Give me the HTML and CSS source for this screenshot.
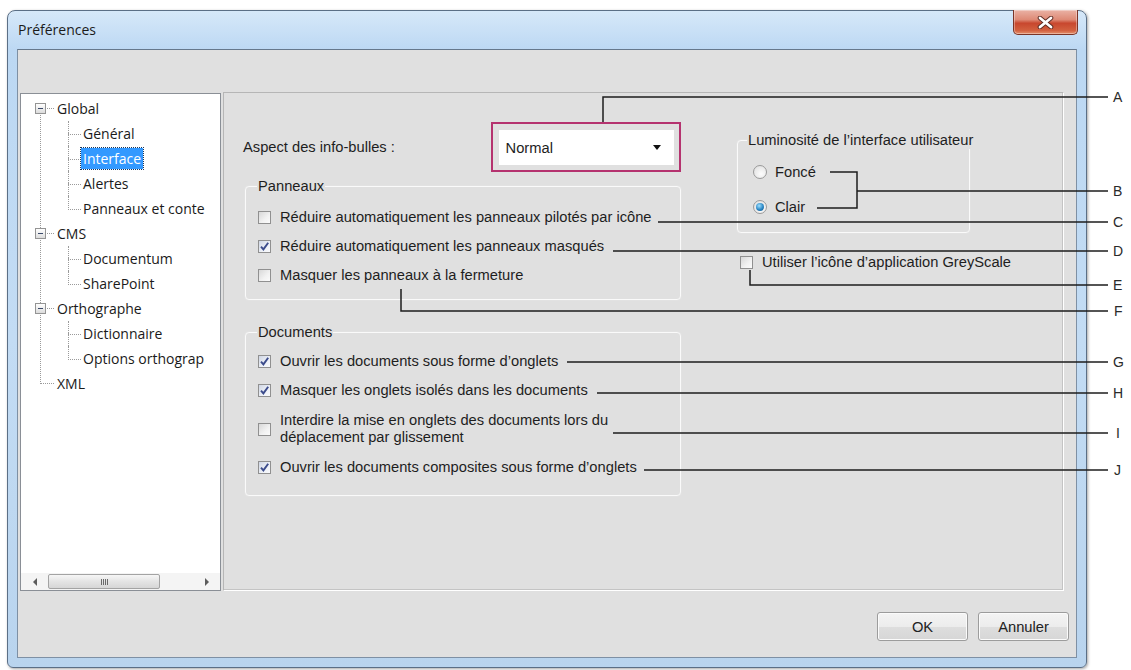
FILE: index.html
```html
<!DOCTYPE html>
<html lang="fr">
<head>
  <meta charset="UTF-8">
  <title>Préférences</title>
  <link rel="stylesheet" href="styles.css">
</head>
<body>
  <div class="window">
    <div class="titlebar">
      <span class="title">Préférences</span>
      <span class="close-btn">
        <svg width="17" height="13" viewBox="0 0 17 13">
          <path d="M3 2 L14 11 M14 2 L3 11" stroke="#5b2a22" stroke-width="4.6" stroke-linecap="round"/>
          <path d="M3 2 L14 11 M14 2 L3 11" stroke="#fff" stroke-width="2.8" stroke-linecap="round"/>
        </svg>
      </span>
    </div>

    <div class="client">
      <div class="main">
        <!-- category tree -->
        <div class="tree">
          <ul class="nodes">
            <li class="root">
              <div class="row"><span class="toggle"></span><span class="label">Global</span></div>
              <ul>
                <li><div class="row"><span class="label">Général</span></div></li>
                <li><div class="row"><span class="label selected">Interface</span></div></li>
                <li><div class="row"><span class="label">Alertes</span></div></li>
                <li><div class="row"><span class="label">Panneaux et conte</span></div></li>
              </ul>
            </li>
            <li class="root">
              <div class="row"><span class="toggle"></span><span class="label">CMS</span></div>
              <ul>
                <li><div class="row"><span class="label">Documentum</span></div></li>
                <li><div class="row"><span class="label">SharePoint</span></div></li>
              </ul>
            </li>
            <li class="root">
              <div class="row"><span class="toggle"></span><span class="label">Orthographe</span></div>
              <ul>
                <li><div class="row"><span class="label">Dictionnaire</span></div></li>
                <li><div class="row"><span class="label">Options orthograp</span></div></li>
              </ul>
            </li>
            <li class="root">
              <div class="row"><span class="label">XML</span></div>
            </li>
          </ul>
          <div class="hscroll">
            <span class="sb-btn"><span class="arrow-left"></span></span>
            <span class="thumb"><span class="grip"></span></span>
            <span class="sb-track"></span>
            <span class="sb-btn"><span class="arrow-right"></span></span>
          </div>
        </div>

        <!-- interface settings -->
        <div class="panel">
          <div class="col">
            <div class="tip-row">
              <span class="tip-label">Aspect des info-bulles :</span>
              <div class="highlight">
                <div class="combo">
                  <span>Normal</span>
                  <span class="combo-arrow"></span>
                </div>
              </div>
            </div>

            <div class="group panels">
              <span class="legend">Panneaux</span>
              <div class="opt"><span class="cb"></span>Réduire automatiquement les panneaux pilotés par icône</div>
              <div class="opt"><span class="cb on"><svg viewBox="0 0 11 11"><path d="M2 5.6 L4.4 8.4 L9.2 1.8" fill="none" stroke="#3c4c8c" stroke-width="1.9"/></svg></span>Réduire automatiquement les panneaux masqués</div>
              <div class="opt"><span class="cb"></span>Masquer les panneaux à la fermeture</div>
            </div>

            <div class="group docs">
              <span class="legend">Documents</span>
              <div class="opt"><span class="cb on"><svg viewBox="0 0 11 11"><path d="M2 5.6 L4.4 8.4 L9.2 1.8" fill="none" stroke="#3c4c8c" stroke-width="1.9"/></svg></span>Ouvrir les documents sous forme d’onglets</div>
              <div class="opt"><span class="cb on"><svg viewBox="0 0 11 11"><path d="M2 5.6 L4.4 8.4 L9.2 1.8" fill="none" stroke="#3c4c8c" stroke-width="1.9"/></svg></span>Masquer les onglets isolés dans les documents</div>
              <div class="opt two-line"><span class="cb"></span><span>Interdire la mise en onglets des documents lors du<br>déplacement par glissement</span></div>
              <div class="opt last"><span class="cb on"><svg viewBox="0 0 11 11"><path d="M2 5.6 L4.4 8.4 L9.2 1.8" fill="none" stroke="#3c4c8c" stroke-width="1.9"/></svg></span>Ouvrir les documents composites sous forme d’onglets</div>
            </div>
          </div>

          <div class="col">
            <div class="group brightness">
              <span class="legend">Luminosité de l’interface utilisateur</span>
              <div class="opt"><span class="radio"></span>Foncé</div>
              <div class="opt"><span class="radio on"></span>Clair</div>
            </div>
            <div class="opt greyscale"><span class="cb"></span>Utiliser l’icône d’application GreyScale</div>
          </div>
        </div>
      </div>

      <div class="footer">
        <button class="btn">OK</button>
        <button class="btn">Annuler</button>
      </div>
    </div>
  </div>

  <!-- callout lines -->
  <svg class="callouts" width="1131" height="670" viewBox="0 0 1131 670">
    <g fill="none" stroke="#1c1c1c" stroke-width="1.5">
      <polyline points="603,122 603,97 1108,97"/>
      <polyline points="830,172 857,172 857,208 817,208"/>
      <line x1="857" y1="191" x2="1108" y2="191"/>
      <line x1="658" y1="222" x2="1108" y2="222"/>
      <line x1="613" y1="251" x2="1108" y2="251"/>
      <polyline points="750,270 750,285 1108,285"/>
      <polyline points="401,289 401,311 1108,311"/>
      <line x1="567" y1="362" x2="1108" y2="362"/>
      <line x1="597" y1="393" x2="1108" y2="393"/>
      <line x1="613" y1="433" x2="1108" y2="433"/>
      <line x1="644" y1="470" x2="1108" y2="470"/>
    </g>
    <g class="letters">
      <text x="1113" y="102">A</text>
      <text x="1113" y="196">B</text>
      <text x="1113" y="227">C</text>
      <text x="1113" y="256">D</text>
      <text x="1113" y="290">E</text>
      <text x="1114" y="316">F</text>
      <text x="1113" y="367">G</text>
      <text x="1113" y="398">H</text>
      <text x="1116" y="438">I</text>
      <text x="1114" y="475">J</text>
    </g>
  </svg>
</body>
</html>
```

FILE: styles.css
```css
* {
  box-sizing: border-box;
}

body {
  margin: 0;
  width: 1131px;
  height: 670px;
  overflow: hidden;
  position: relative;
  background: #fff;
  font-family: 'Liberation Sans', Arial, sans-serif;
  font-size: 14.7px;
  color: #1e1e1e;
}

/* Window frame */
.window {
  margin: 10px 0 0 7px;
  width: 1080px;
  height: 658px;
  border: 1px solid #5b6f86;
  border-radius: 8px 8px 6px 6px;
  background: linear-gradient(to bottom, #d6e8f9, #bcd8f3 6%, #c3dcf4 50%, #b9d4ee);
  box-shadow: 1px 1px 3px rgba(0, 0, 0, 0.35);
  display: flex;
  flex-direction: column;
}

.titlebar {
  height: 38px;
  display: flex;
  align-items: flex-start;
}

.title {
  font-family: 'Open Sans', sans-serif;
  font-size: 14px;
  line-height: 20px;
  color: #1b1b1b;
  margin: 9px 0 0 10px;
}

.close-btn {
  margin: -1px 8px 0 auto;
  width: 65px;
  height: 25px;
  border: 1px solid #7b3427;
  border-top: none;
  border-radius: 0 0 5px 5px;
  background: linear-gradient(to bottom, #eab2a5, #de8a76 40%, #c8472e 55%, #d2603f 85%, #e4906c);
  box-shadow: inset 0 0 0 1px rgba(255, 255, 255, 0.35);
  display: flex;
  align-items: center;
  justify-content: center;
}

.client {
  flex: 1;
  margin: 0 9px 9px;
  background: #e0e0e0;
  border: 1px solid #7e90a4;
  border-top-color: #66788c;
  padding: 42px 0 0 2px;
  display: flex;
  flex-direction: column;
}

.main {
  display: flex;
  gap: 2px;
  height: 499px;
  align-items: flex-start;
}

/* Tree view */
.tree {
  width: 201px;
  height: 498px;
  margin-top: 1px;
  border: 1px solid #8a8f96;
  background: #fff;
  display: flex;
  flex-direction: column;
  font-family: 'Open Sans', sans-serif;
  font-size: 14px;
  color: #1a1a1a;
}

.nodes {
  list-style: none;
  margin: 0;
  padding: 2px 0 0;
  flex: 1;
  overflow: hidden;
}

.nodes ul {
  list-style: none;
  margin: 0;
  padding: 0;
}

.nodes li {
  position: relative;
}

.row {
  height: 25px;
  display: flex;
  align-items: center;
  white-space: nowrap;
  position: relative;
}

.root > .row {
  padding-left: 34px;
}

.nodes ul .row {
  padding-left: 60px;
}

.label {
  padding: 0 2px;
  line-height: 21px;
}

.label.selected {
  background: #3399ff;
  color: #fff;
  outline: 1px dotted #17355c;
}

.toggle {
  position: absolute;
  left: 14px;
  top: 7px;
  width: 11px;
  height: 11px;
  border: 1px solid #949494;
  background: linear-gradient(to bottom, #fff, #dcdcdc);
  z-index: 1;
}

.toggle::after {
  content: "";
  position: absolute;
  left: 2px;
  top: 4px;
  width: 5px;
  height: 1px;
  background: #3b4a6a;
}

/* dotted connectors */
.root > .row::before {
  content: "";
  position: absolute;
  left: 19px;
  top: 12px;
  width: 14px;
  border-top: 1px dotted #9a9a9a;
}

.root:not(:last-child)::after {
  content: "";
  position: absolute;
  left: 19px;
  top: 12px;
  bottom: -13px;
  border-left: 1px dotted #9a9a9a;
}

.nodes ul li::before {
  content: "";
  position: absolute;
  left: 47px;
  top: 0;
  width: 12px;
  height: 13px;
  border-left: 1px dotted #9a9a9a;
  border-bottom: 1px dotted #9a9a9a;
}

.nodes ul li:not(:last-child)::after {
  content: "";
  position: absolute;
  left: 47px;
  top: 12px;
  bottom: 0;
  border-left: 1px dotted #9a9a9a;
}

/* horizontal scroll bar */
.hscroll {
  height: 17px;
  display: flex;
  align-items: center;
  background: #f4f4f4;
}

.sb-btn {
  width: 27px;
  height: 17px;
  display: flex;
  align-items: center;
  justify-content: center;
}

.arrow-left {
  border-top: 4px solid transparent;
  border-bottom: 4px solid transparent;
  border-right: 4px solid #5c5c5c;
}

.arrow-right {
  border-top: 4px solid transparent;
  border-bottom: 4px solid transparent;
  border-left: 4px solid #5c5c5c;
}

.thumb {
  width: 112px;
  height: 15px;
  border: 1px solid #a3a3a3;
  border-radius: 2px;
  background: linear-gradient(to bottom, #f6f6f6, #e4e4e4 50%, #d6d6d6);
  display: flex;
  align-items: center;
  justify-content: center;
}

.grip {
  width: 7px;
  height: 6px;
  background: repeating-linear-gradient(to right, #6a6a6a 0 1px, transparent 1px 2px);
}

.sb-track {
  flex: 1;
}

/* Right panel */
.panel {
  width: 841px;
  height: 499px;
  border: 1px solid #fff;
  border-left-color: #b6b6b6;
  border-top-color: #b6b6b6;
  box-shadow: inset -1px -1px 0 #c4c4c4;
  padding: 0 0 0 21px;
  display: grid;
  grid-template-columns: 436px 233px;
  column-gap: 56px;
  align-items: start;
}

.tip-row {
  display: flex;
  align-items: center;
  height: 50px;
  margin: 29px 0 0 -2px;
}

.tip-label {
  width: 254px;
}

.highlight {
  width: 195px;
  height: 50px;
  border: 2px solid #b5336f;
  padding: 6px 5px 5px 6px;
}

.combo {
  height: 35px;
  background: #fff;
  display: flex;
  align-items: center;
  justify-content: space-between;
  padding: 0 13px 0 7px;
}

.combo-arrow {
  border-left: 4px solid transparent;
  border-right: 4px solid transparent;
  border-top: 5px solid #111;
}

/* Group boxes */
.group {
  position: relative;
  border: 1px solid #fafafa;
  border-radius: 4px;
  box-shadow: 0 0 1px #f2f2f2;
}

.legend {
  position: absolute;
  top: -9px;
  left: 11px;
  padding: 0 1px;
  line-height: 17px;
  background: #e0e0e0;
  white-space: nowrap;
}

.opt {
  display: flex;
  align-items: center;
  min-height: 20px;
  line-height: 17px;
  white-space: nowrap;
}

.panels {
  margin-top: 14px;
  padding: 20px 10px 14px 12px;
}

.panels .opt + .opt {
  margin-top: 9px;
}

.docs {
  margin-top: 32px;
  padding: 18px 10px 18px 12px;
}

.docs .opt + .opt {
  margin-top: 9px;
}

.docs .two-line {
  margin-top: 12px !important;
}

.docs .last {
  margin-top: 11px !important;
}

.cb {
  width: 13px;
  height: 13px;
  flex: none;
  margin-right: 9px;
  border: 1px solid #909090;
  background: linear-gradient(135deg, #d8d8d8, #f2f2f2 60%, #fbfbfb);
  display: flex;
}

.cb.on {
  background: linear-gradient(135deg, #cfd6e4, #eef1f7 60%, #f8f9fc);
}

.cb svg {
  width: 11px;
  height: 11px;
}

.brightness {
  margin-top: 47px;
  padding: 21px 10px 15px 15px;
}

.brightness .legend {
  left: 9px;
}

.brightness .opt + .opt {
  margin-top: 15px;
}

.radio {
  width: 14px;
  height: 14px;
  flex: none;
  margin-right: 8px;
  border: 1px solid #9a9a9a;
  border-radius: 50%;
  background: radial-gradient(circle at 60% 65%, #fdfdfd, #dcdcdc);
  display: flex;
  align-items: center;
  justify-content: center;
}

.radio.on::after {
  content: "";
  width: 8px;
  height: 8px;
  border-radius: 50%;
  background: radial-gradient(circle at 40% 35%, #9fe0ff, #2a86c4 55%, #0f4f82);
}

.greyscale {
  margin: 19px 0 0 3px;
}

/* Buttons */
.footer {
  display: flex;
  justify-content: flex-end;
  gap: 10px;
  padding: 21px 7px 0 0;
}

.btn {
  width: 91px;
  height: 29px;
  border: 1px solid #9c9c9c;
  border-radius: 3px;
  background: linear-gradient(to bottom, #f4f4f4, #ececec 50%, #dedede 51%, #d6d6d6);
  box-shadow: inset 0 0 0 1px #fbfbfb;
  font-family: 'Liberation Sans', Arial, sans-serif;
  font-size: 14.7px;
  color: #222;
  padding: 0;
}

/* Annotation overlay */
.callouts {
  position: absolute;
  top: 0;
  left: 0;
  pointer-events: none;
}

.letters text {
  font-family: 'Liberation Sans', Arial, sans-serif;
  font-size: 14px;
  fill: #2a2a2a;
}
```
